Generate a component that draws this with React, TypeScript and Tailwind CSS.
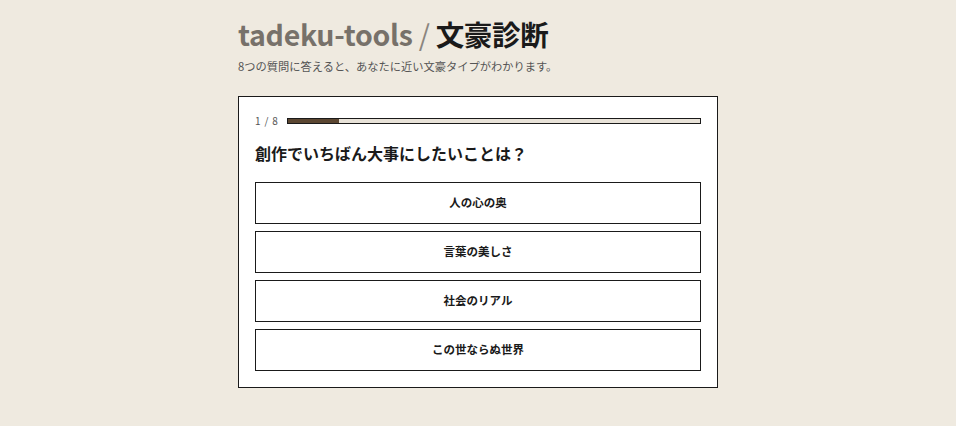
const OPTIONS = ["人の心の奥", "言葉の美しさ", "社会のリアル", "この世ならぬ世界"];

export default function App() {
  const current = 1;
  const total = 8;
  const pct = (current / total) * 100;

  return (
    <div
      className="min-h-screen w-full bg-[#efeae0] text-[#1a1a1a]"
      style={{ fontFamily: '"Noto Sans CJK JP", "Noto Sans", sans-serif' }}
    >
      <div className="mx-auto w-[480px] pt-[13px]">
        <h1 className="text-[28.5px] font-bold leading-[42px] tracking-[-0.01em]">
          <span className="text-[#77716a]">tadeku-tools</span>
          <span className="font-normal text-[#8a857e]"> / </span>
          <span className="text-[#1a1a1a]">文豪診断</span>
        </h1>
        <p className="mt-[3px] text-[11.25px] leading-[16px] text-[#555]">
          8つの質問に答えると、あなたに近い文豪タイプがわかります。
        </p>

        <div className="mt-[22px] border border-[#1a1a1a] bg-white px-4 pb-[16px] pt-[17px]">
          <div className="flex items-center gap-[8px]">
            <span className="text-[10px] leading-[14px] tracking-[0.08em] text-[#555]">
              {current} / {total}
            </span>
            <div className="h-[6px] flex-1 border border-[#1a1a1a] bg-[#e8e2d8]">
              <div className="h-full bg-[#5b4631]" style={{ width: `${pct}%` }} />
            </div>
          </div>

          <h2 className="mt-[13px] text-[16px] font-bold leading-[24px]">
            創作でいちばん大事にしたいことは？
          </h2>

          <div className="mt-[17px] flex flex-col gap-[7px]">
            {OPTIONS.map((o) => (
              <button
                key={o}
                className="flex h-[42px] w-full items-center justify-center border border-[#1a1a1a] bg-white text-[11.5px] font-bold text-[#1a1a1a]"
              >
                {o}
              </button>
            ))}
          </div>
        </div>
      </div>
    </div>
  );
}
